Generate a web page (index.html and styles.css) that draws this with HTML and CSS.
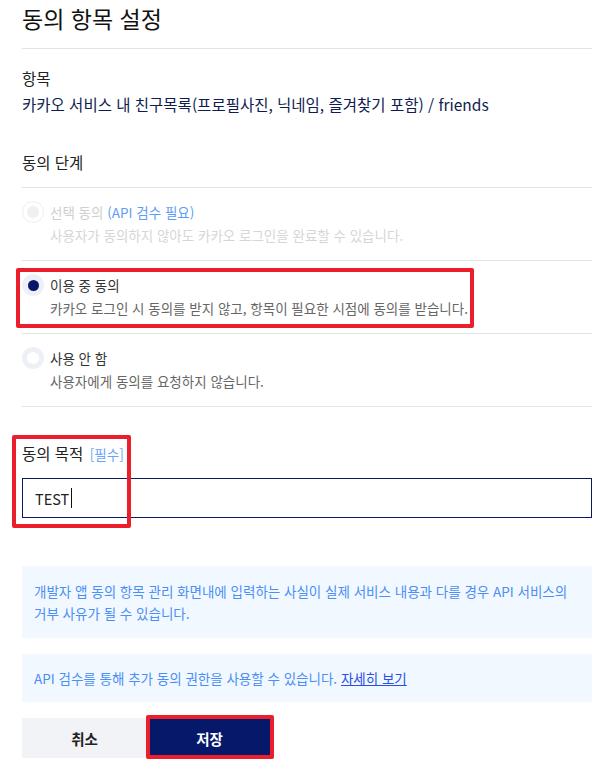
FILE: index.html
```html
<!DOCTYPE html>
<html lang="ko">
<head>
<meta charset="utf-8">
<title>동의 항목 설정</title>
<link rel="stylesheet" href="styles.css">
</head>
<body>
<div class="page">
  <h1 class="title">동의 항목 설정</h1>

  <section class="field">
    <div class="field-label">항목</div>
    <div class="field-value">카카오 서비스 내 친구목록(프로필사진, 닉네임, 즐겨찾기 포함) / friends</div>
  </section>

  <section class="steps">
    <div class="steps-head">동의 단계</div>
    <div class="option disabled">
      <span class="radio"><span class="dot"></span></span>
      <div class="option-text">
        <div class="option-label">선택 동의 <span class="blue">(API 검수 필요)</span></div>
        <div class="option-desc">사용자가 동의하지 않아도 카카오 로그인을 완료할 수 있습니다.</div>
      </div>
    </div>
    <div class="option checked">
      <span class="radio"><span class="dot"></span></span>
      <div class="option-text">
        <div class="option-label">이용 중 동의</div>
        <div class="option-desc">카카오 로그인 시 동의를 받지 않고, 항목이 필요한 시점에 동의를 받습니다.</div>
      </div>
    </div>
    <div class="option">
      <span class="radio"><span class="dot"></span></span>
      <div class="option-text">
        <div class="option-label">사용 안 함</div>
        <div class="option-desc">사용자에게 동의를 요청하지 않습니다.</div>
      </div>
    </div>
  </section>

  <section class="purpose">
    <div class="purpose-head">동의 목적 <span class="req">[필수]</span></div>
    <div class="input"><span>TEST</span><span class="caret"></span></div>
  </section>

  <div class="notice two-line">개발자 앱 동의 항목 관리 화면내에 입력하는 사실이 실제 서비스 내용과 다를 경우 API 서비스의 거부 사유가 될 수 있습니다.</div>
  <div class="notice">API 검수를 통해 추가 동의 권한을 사용할 수 있습니다. <a class="more" href="#">자세히 보기</a></div>

  <div class="actions">
    <button class="btn cancel" type="button">취소</button>
    <button class="btn save" type="button">저장</button>
  </div>
</div>

<div class="mark mark-option"></div>
<div class="mark mark-purpose"></div>
<div class="mark mark-save"></div>
</body>
</html>
```

FILE: styles.css
```css
* { box-sizing: border-box; }

html, body {
  margin: 0;
  padding: 0;
  background: #ffffff;
}

body {
  font-family: "Noto Sans CJK KR", "Noto Sans", sans-serif;
  color: #222222;
  position: relative;
  width: 607px;
  height: 783px;
  overflow: hidden;
}

.page {
  width: 570px;
  margin-left: 22px;
  display: flex;
  flex-direction: column;
}

.title {
  margin: 0;
  font-size: 23px;
  font-weight: 400;
  line-height: 36px;
  height: 49px;
  padding-bottom: 12px;
  border-bottom: 1px solid #e3e3e3;
  color: #111111;
}

.field {
  margin-top: 18px;
  display: flex;
  flex-direction: column;
  gap: 4px;
}

.field-label {
  font-size: 15.5px;
  line-height: 22px;
  color: #222;
}

.field-value {
  font-size: 15.5px;
  line-height: 22px;
  color: #0f1c50;
}

.steps {
  margin-top: 36px;
  display: flex;
  flex-direction: column;
}

.steps-head {
  font-size: 15.5px;
  line-height: 22px;
  padding-bottom: 14px;
  border-bottom: 1px solid #e3e3e3;
  color: #222;
}

.option {
  display: flex;
  align-items: flex-start;
  gap: 6px;
  padding: 13px 0 14px;
  border-bottom: 1px solid #e3e3e3;
}

.radio {
  width: 22px;
  height: 22px;
  border-radius: 50%;
  background: #eef0f7;
  display: flex;
  align-items: center;
  justify-content: center;
  flex: none;
}

.dot {
  width: 12px;
  height: 12px;
  border-radius: 50%;
  background: #ffffff;
}

.checked .dot {
  width: 11px;
  height: 11px;
  background: #071868;
}

.disabled .radio {
  background: #ffffff;
  border: 1px solid #eeeeee;
}

.disabled .dot {
  background: #f0f0f3;
}

.option-text {
  display: flex;
  flex-direction: column;
  gap: 2px;
}

.option-label {
  font-size: 13.5px;
  line-height: 22px;
  color: #333;
}

.option-desc {
  font-size: 13.5px;
  line-height: 21px;
  color: #666;
}

.disabled .option-label { color: #cfcfcf; }
.disabled .option-label .blue { color: #5e9df7; }
.disabled .option-desc { color: #d6d6d6; }

.purpose {
  margin-top: 35px;
  display: flex;
  flex-direction: column;
  gap: 13px;
}

.purpose-head {
  font-size: 15.5px;
  line-height: 22px;
  color: #222;
}

.req {
  font-size: 13.5px;
  color: #6aa6f7;
  margin-left: 2px;
}

.input {
  height: 40px;
  border: 1px solid #0a1a63;
  padding: 0 12px;
  display: flex;
  align-items: center;
  font-size: 14.5px;
  color: #222;
}

.caret {
  display: inline-block;
  width: 1px;
  height: 20px;
  background: #111;
  margin-left: 2px;
}

.notice {
  background: #f2f8ff;
  color: #4a8ff5;
  font-size: 13.5px;
  line-height: 22px;
  padding: 13px 12px;
  margin-top: 16px;
}

.two-line {
  margin-top: 48px;
  padding: 14px 12px;
}

.more {
  color: #2850e8;
  text-decoration: underline;
}

.actions {
  margin-top: 16px;
  display: flex;
}

.btn {
  width: 125px;
  height: 40px;
  border: none;
  font-family: inherit;
  font-size: 14.5px;
  font-weight: 700;
  padding: 0;
}

.cancel {
  background: #f2f3f7;
  color: #222;
}

.save {
  background: #05186a;
  color: #ffffff;
}

.mark {
  position: absolute;
  border: 4px solid #ea1f2b;
  border-radius: 2px;
  pointer-events: none;
}

.mark-option { left: 16px; top: 268px; width: 458px; height: 60px; }
.mark-purpose { left: 12px; top: 435px; width: 119px; height: 93px; }
.mark-save { left: 146px; top: 715px; width: 128px; height: 44px; }
```
